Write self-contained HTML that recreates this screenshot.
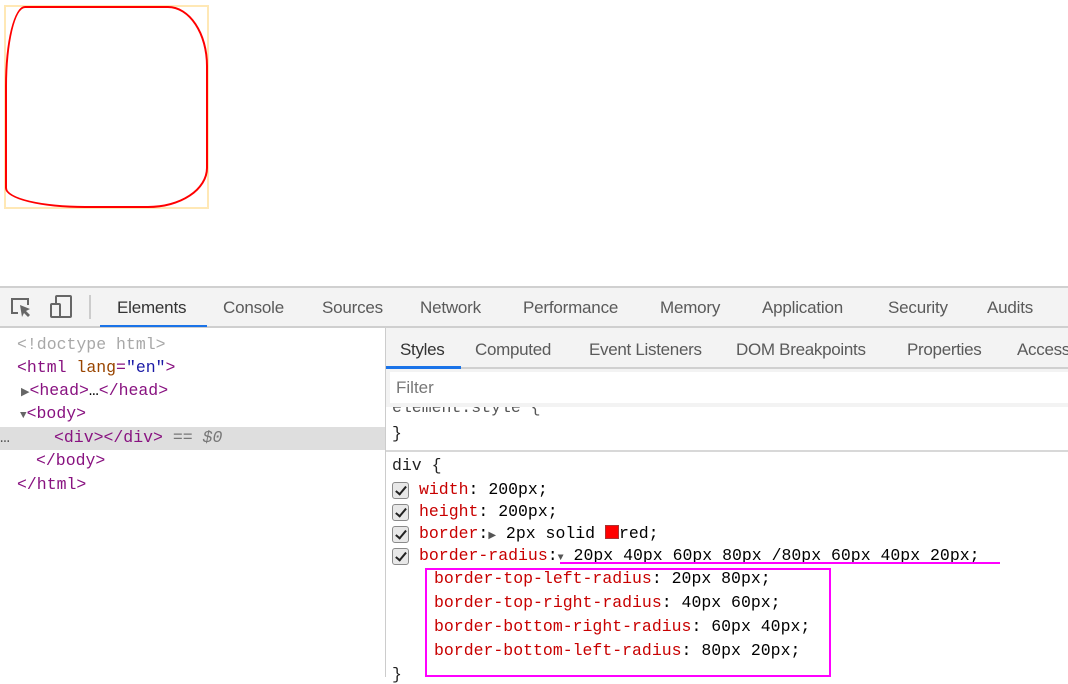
<!DOCTYPE html>
<html><head><style>
*{margin:0;padding:0;box-sizing:border-box}
body{width:1068px;height:677px;overflow:hidden;background:#fff;position:relative;font-family:"Liberation Sans",sans-serif}
.a{position:absolute;white-space:nowrap}
.tab{position:absolute;font-size:17px;color:#5a5a5a;top:298px;letter-spacing:-0.2px}
.st{position:absolute;font-size:17px;color:#5a5a5a;top:340px;letter-spacing:-0.3px}
.m{font-family:"Liberation Mono",monospace;font-size:16.5px;position:absolute;white-space:nowrap}
.tg{color:#881280}.at{color:#994500}.av{color:#1a1aa6}.gr{color:#a8a8a8}
.p{color:#c80000}.v{color:#222}
.cb{position:absolute;width:17px;height:17px;border:1px solid #8a8a8a;border-radius:3px;background:#e8e8e8;left:392px}
.cb:after{content:"";position:absolute;left:5px;top:1px;width:4px;height:9px;border:solid #222;border-width:0 2.5px 2.5px 0;transform:rotate(40deg)}
</style></head><body>
<div class="a" style="left:4px;top:5px;width:205px;height:204px;border:2px solid #ffe8b5"></div>
<div class="a" style="left:5px;top:6px;width:203px;height:202px;border:2px solid red;border-radius:20px 40px 60px 80px / 80px 60px 40px 20px"></div>

<div class="a" style="left:0;top:286px;width:1068px;height:42px;background:#f3f3f3;border-top:2px solid #d0d0d0;border-bottom:2px solid #cfcfcf"></div>
<svg class="a" style="left:10px;top:296px" width="24" height="24" viewBox="0 0 24 24"><path d="M8 17H2V3h16v6" fill="none" stroke="#666" stroke-width="2"/><path d="M10 9l10 4-4 2 4 4-2 2-4-4-2 4z" fill="#666"/></svg>
<svg class="a" style="left:49px;top:294px" width="26" height="26" viewBox="0 0 26 26"><rect x="7" y="2" width="15" height="21" rx="1" fill="none" stroke="#666" stroke-width="2"/><rect x="2" y="10" width="9" height="13" rx="1" fill="#f3f3f3" stroke="#666" stroke-width="2"/></svg>
<div class="a" style="left:89px;top:295px;width:2px;height:24px;background:#ccc"></div>
<div class="tab" style="left:117px;color:#333">Elements</div>
<div class="a" style="left:100px;top:325px;width:107px;height:2px;background:#1a73e8"></div>
<div class="tab" style="left:223px">Console</div>
<div class="tab" style="left:322px">Sources</div>
<div class="tab" style="left:420px">Network</div>
<div class="tab" style="left:523px">Performance</div>
<div class="tab" style="left:660px">Memory</div>
<div class="tab" style="left:762px">Application</div>
<div class="tab" style="left:888px">Security</div>
<div class="tab" style="left:987px">Audits</div>

<div class="a" style="left:385px;top:328px;width:1px;height:349px;background:#ccc"></div>
<div class="m gr" style="left:17px;top:335px">&lt;!doctype html&gt;</div>
<div class="m" style="left:17px;top:358px"><span class="tg">&lt;html</span> <span class="at">lang</span><span class="tg">=</span><span class="av">"en"</span><span class="tg">&gt;</span></div>
<div class="m" style="left:21px;top:381px"><span style="font-size:11px;color:#666">▶</span><span class="tg">&lt;head&gt;</span>…<span class="tg">&lt;/head&gt;</span></div>
<div class="m" style="left:20px;top:404px"><span style="font-size:11px;color:#666">▼</span><span class="tg">&lt;body&gt;</span></div>
<div class="a" style="left:0;top:427px;width:385px;height:23px;background:#dedede"></div>
<div class="m" style="left:0;top:428px;color:#555">…</div>
<div class="m" style="left:54px;top:428px"><span class="tg">&lt;div&gt;&lt;/div&gt;</span> <span style="color:#777">== <i>$0</i></span></div>
<div class="m tg" style="left:36px;top:451px">&lt;/body&gt;</div>
<div class="m tg" style="left:17px;top:475px">&lt;/html&gt;</div>

<div class="a" style="left:386px;top:328px;width:682px;height:41px;background:#f3f3f3;border-bottom:2px solid #d0d0d0"></div>
<div class="st" style="left:400px;color:#333">Styles</div>
<div class="a" style="left:386px;top:366px;width:75px;height:3px;background:#1a73e8"></div>
<div class="st" style="left:475px">Computed</div>
<div class="st" style="left:589px">Event Listeners</div>
<div class="st" style="left:736px">DOM Breakpoints</div>
<div class="st" style="left:907px">Properties</div>
<div class="st" style="left:1017px">Accessibility</div>
<div class="a" style="left:386px;top:369px;width:682px;height:38px;background:#f3f3f3"></div>
<div class="a" style="left:390px;top:372px;width:678px;height:31px;background:#fff"></div>
<div class="a" style="left:396px;top:378px;font-size:17px;color:#777">Filter</div>
<div class="m v" style="left:392px;top:398px;clip-path:inset(9px 0 0 0);color:#555">element.style {</div>
<div class="m v" style="left:392px;top:424px">}</div>
<div class="a" style="left:386px;top:450px;width:682px;height:2px;background:#d8d8d8"></div>
<div class="m v" style="left:392px;top:456px">div {</div>
<div class="cb" style="top:482px"></div>
<div class="m" style="left:419px;top:480px"><span class="p">width</span>: 200px;</div>
<div class="cb" style="top:504px"></div>
<div class="m" style="left:419px;top:502px"><span class="p">height</span>: 200px;</div>
<div class="cb" style="top:526px"></div>
<div class="m" style="left:419px;top:524px"><span class="p">border</span>:<span style="font-size:10px;color:#555">▶</span> 2px solid <span style="display:inline-block;width:14px;height:14px;background:red;border:1px solid #a33;vertical-align:-1px"></span>red;</div>
<div class="cb" style="top:548px"></div>
<div class="m" style="left:419px;top:546px"><span class="p">border-radius</span>:<span style="font-size:10px;color:#555">▼</span> 20px 40px 60px 80px /80px 60px 40px 20px;</div>
<div class="a" style="left:560px;top:562px;width:440px;height:2px;background:#f0f"></div>
<div class="a" style="left:425px;top:568px;width:406px;height:109px;border:2px solid #f0f"></div>
<div class="m" style="left:434px;top:569px"><span class="p">border-top-left-radius</span>: 20px 80px;</div>
<div class="m" style="left:434px;top:593px"><span class="p">border-top-right-radius</span>: 40px 60px;</div>
<div class="m" style="left:434px;top:617px"><span class="p">border-bottom-right-radius</span>: 60px 40px;</div>
<div class="m" style="left:434px;top:641px"><span class="p">border-bottom-left-radius</span>: 80px 20px;</div>
<div class="m v" style="left:392px;top:665px">}</div>
</body></html>
